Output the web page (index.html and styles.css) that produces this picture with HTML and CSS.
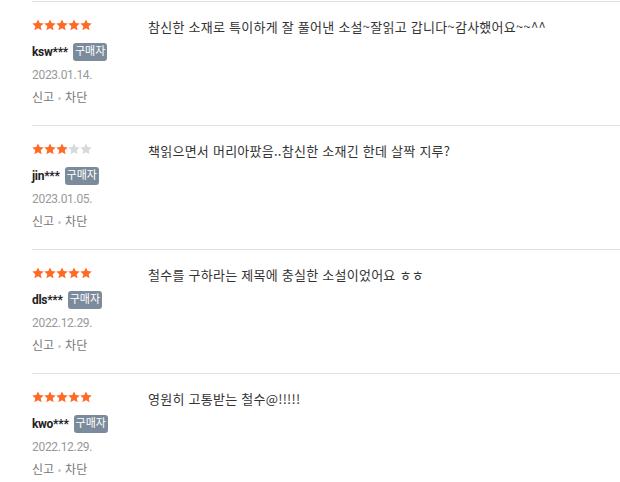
FILE: index.html
```html
<!DOCTYPE html>
<html lang="ko">
<head>
    <meta charset="UTF-8">
    <title>리뷰</title>
    <link rel="stylesheet" href="styles.css">
</head>
<body>
    <svg width="0" height="0" class="defs">
        <defs>
            <path id="star" d="M6 0.4 L7.7 4.1 L11.7 4.5 L8.7 7.2 L9.6 11.3 L6 9.2 L2.4 11.3 L3.3 7.2 L0.3 4.5 L4.3 4.1 Z"/>
        </defs>
    </svg>
    <ul class="reviews">
        <li class="review">
            <div class="meta">
                <div class="stars" data-score="5"></div>
                <div class="writer"><span class="name">ksw***</span><span class="badge">구매자</span></div>
                <div class="date">2023.01.14.</div>
                <div class="actions"><a>신고</a><span class="dot"></span><a>차단</a></div>
            </div>
            <p class="text">참신한 소재로 특이하게 잘 풀어낸 소설~잘읽고 갑니다~감사했어요~~^^</p>
        </li>
        <li class="review">
            <div class="meta">
                <div class="stars" data-score="3"></div>
                <div class="writer"><span class="name">jin***</span><span class="badge">구매자</span></div>
                <div class="date">2023.01.05.</div>
                <div class="actions"><a>신고</a><span class="dot"></span><a>차단</a></div>
            </div>
            <p class="text">책읽으면서 머리아팠음..참신한 소재긴 한데 살짝 지루?</p>
        </li>
        <li class="review">
            <div class="meta">
                <div class="stars" data-score="5"></div>
                <div class="writer"><span class="name">dls***</span><span class="badge">구매자</span></div>
                <div class="date">2022.12.29.</div>
                <div class="actions"><a>신고</a><span class="dot"></span><a>차단</a></div>
            </div>
            <p class="text">철수를 구하라는 제목에 충실한 소설이었어요 ㅎㅎ</p>
        </li>
        <li class="review">
            <div class="meta">
                <div class="stars" data-score="5"></div>
                <div class="writer"><span class="name">kwo***</span><span class="badge">구매자</span></div>
                <div class="date">2022.12.29.</div>
                <div class="actions"><a>신고</a><span class="dot"></span><a>차단</a></div>
            </div>
            <p class="text">영원히 고통받는 철수@!!!!!</p>
        </li>
    </ul>
    <script>
    // fill star rows from data-score
    document.querySelectorAll('.stars').forEach(box => {
        let score = Number(box.dataset.score);
        for (let i = 0; i < 5; i++) {
            let svg = document.createElementNS('http://www.w3.org/2000/svg', 'svg');
            svg.setAttribute('viewBox', '0 0 12 12');
            svg.setAttribute('class', i < score ? 'star on' : 'star');
            let use = document.createElementNS('http://www.w3.org/2000/svg', 'use');
            use.setAttribute('href', '#star');
            svg.appendChild(use);
            box.appendChild(svg);
        }
    });
    </script>
</body>
</html>
```

FILE: styles.css
```css
* {
    margin: 0;
    padding: 0;
    box-sizing: border-box;
}

body {
    font-family: Roboto, "Noto Sans CJK KR", sans-serif;
    background: #fff;
    color: #333;
    padding-top: 1px;
}

.defs {
    position: absolute;
}

.reviews {
    list-style: none;
    padding-left: 32px;
}

.review {
    display: flex;
    height: 124px;
    border-top: 1px solid #e0e0e0;
    padding-top: 16px;
}

.meta {
    width: 116px;
    flex-shrink: 0;
}

.stars {
    display: flex;
    height: 14px;
    align-items: center;
}

.star {
    width: 12px;
    height: 12px;
    fill: #d7dadd;
}

.star.on {
    fill: #ff6a27;
}

.writer {
    display: flex;
    align-items: center;
    margin-top: 11px;
    height: 18px;
}

.name {
    font-size: 12px;
    font-weight: bold;
    color: #222;
    letter-spacing: -0.3px;
}

.badge {
    margin-left: 5px;
    background: #7c8b9b;
    color: #fff;
    font-size: 11px;
    line-height: 18px;
    padding: 0 2px;
    border-radius: 3px;
}

.date {
    margin-top: 5px;
    font-size: 12px;
    line-height: 18px;
    color: #999;
    letter-spacing: -0.3px;
}

.actions {
    margin-top: 5px;
    display: flex;
    align-items: center;
    font-size: 12px;
    line-height: 18px;
    color: #777;
}

.dot {
    width: 3px;
    height: 3px;
    border-radius: 50%;
    background: #ccc;
    margin: 0 4px;
}

.text {
    font-family: "Noto Sans CJK KR", sans-serif;
    font-size: 13px;
    line-height: 18px;
    letter-spacing: 0.25px;
    color: #333;
}
```
